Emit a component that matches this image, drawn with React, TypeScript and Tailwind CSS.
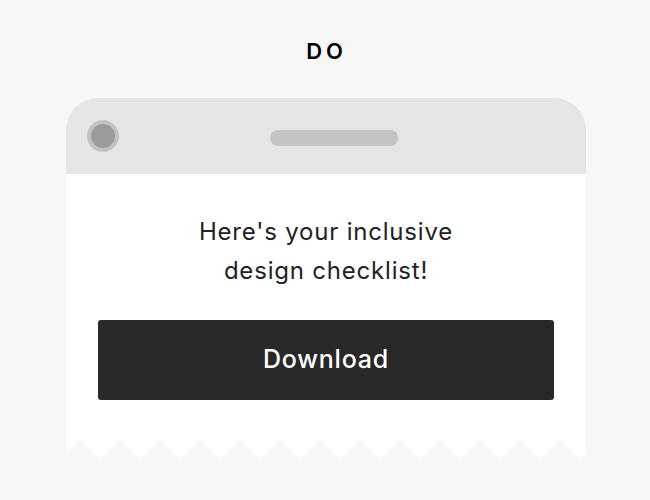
const zigzag = (() => {
  const pts: string[] = ["0,0", "520,0", "520,14"];
  for (let k = 12; k >= 0; k--) {
    pts.push(`${34 + 40 * k},20`);
    pts.push(`${14 + 40 * k},0`);
  }
  pts.push("0,14");
  return pts.join(" ");
})();

export default function App() {
  return (
    <div className="h-[500px] w-[650px] bg-[#f7f7f7] font-['Inter',sans-serif] text-[#222]">
      <div className="flex h-[98px] justify-center pt-[37px]">
        <h1 className="pl-[3px] text-[22px] font-semibold leading-[28px] tracking-[0.17em] text-black">DO</h1>
      </div>

      <div className="ml-[66px] w-[520px]">
        <div className="flex h-[76px] items-center rounded-t-[32px] bg-[#e5e5e5] pl-[21px]">
          <div className="flex h-[32px] w-[32px] items-center justify-center rounded-full bg-[#c2c2c2]">
            <div className="h-[24px] w-[24px] rounded-full bg-[#9b9b9b]" />
          </div>
          <div className="mt-[4px] ml-[151px] h-[16px] w-[128px] rounded-full bg-[#c4c4c4]" />
        </div>

        <div className="bg-white px-[32px] pt-[38px] pb-[40px]">
          <p className="text-center text-[24px] leading-[39px] tracking-[0.8px]">
            Here's your inclusive
            <br />
            design checklist!
          </p>
          <button className="mt-[30px] flex h-[80px] w-full items-center justify-center rounded-[3px] bg-[#282828] text-[25px] font-medium tracking-[0.8px] text-white">
            Download
          </button>
        </div>
        <svg width="520" height="20" viewBox="0 0 520 20" className="block">
          <polygon points={zigzag} fill="#ffffff" />
        </svg>
      </div>
    </div>
  );
}
